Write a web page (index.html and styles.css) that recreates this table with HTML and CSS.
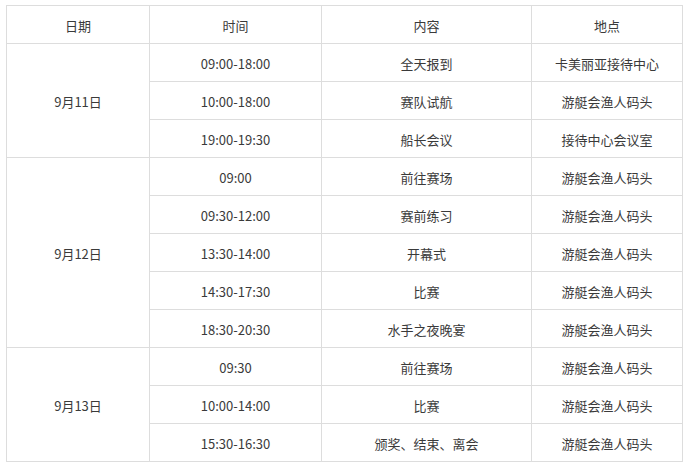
FILE: index.html
```html
<!DOCTYPE html>
<html lang="zh-CN">
<head>
<meta charset="utf-8">
<title>日程</title>
<link rel="stylesheet" href="styles.css">
</head>
<body>
<table class="schedule">
  <colgroup>
    <col class="c-date">
    <col class="c-time">
    <col class="c-content">
    <col class="c-place">
  </colgroup>
  <thead>
    <tr><th>日期</th><th>时间</th><th>内容</th><th>地点</th></tr>
  </thead>
  <tbody>
    <tr><td rowspan="3">9月11日</td><td>09:00-18:00</td><td>全天报到</td><td>卡美丽亚接待中心</td></tr>
    <tr><td>10:00-18:00</td><td>赛队试航</td><td>游艇会渔人码头</td></tr>
    <tr><td>19:00-19:30</td><td>船长会议</td><td>接待中心会议室</td></tr>
    <tr><td rowspan="5">9月12日</td><td>09:00</td><td>前往赛场</td><td>游艇会渔人码头</td></tr>
    <tr><td>09:30-12:00</td><td>赛前练习</td><td>游艇会渔人码头</td></tr>
    <tr><td>13:30-14:00</td><td>开幕式</td><td>游艇会渔人码头</td></tr>
    <tr><td>14:30-17:30</td><td>比赛</td><td>游艇会渔人码头</td></tr>
    <tr><td>18:30-20:30</td><td>水手之夜晚宴</td><td>游艇会渔人码头</td></tr>
    <tr><td rowspan="3">9月13日</td><td>09:30</td><td>前往赛场</td><td>游艇会渔人码头</td></tr>
    <tr><td>10:00-14:00</td><td>比赛</td><td>游艇会渔人码头</td></tr>
    <tr><td>15:30-16:30</td><td>颁奖、结束、离会</td><td>游艇会渔人码头</td></tr>
  </tbody>
</table>
</body>
</html>
```
FILE: styles.css
```css
html, body {
  margin: 0;
  padding: 0;
  background: #ffffff;
}
body {
  font-family: "Noto Sans CJK SC", "Noto Sans", sans-serif;
  font-size: 13px;
  color: #3a3a3a;
}
.schedule {
  border-collapse: collapse;
  table-layout: fixed;
  width: 676px;
  margin: 5px 0 0 6px;
}
.c-date { width: 143px; }
.c-time { width: 172px; }
.c-content { width: 210px; }
.c-place { width: 151px; }
.schedule th,
.schedule td {
  border: 1px solid #dddddd;
  height: 38px;
  padding: 2px 0 0 0;
  box-sizing: border-box;
  text-align: center;
  vertical-align: middle;
  font-weight: normal;
  line-height: 18px;
  white-space: nowrap;
}
```
